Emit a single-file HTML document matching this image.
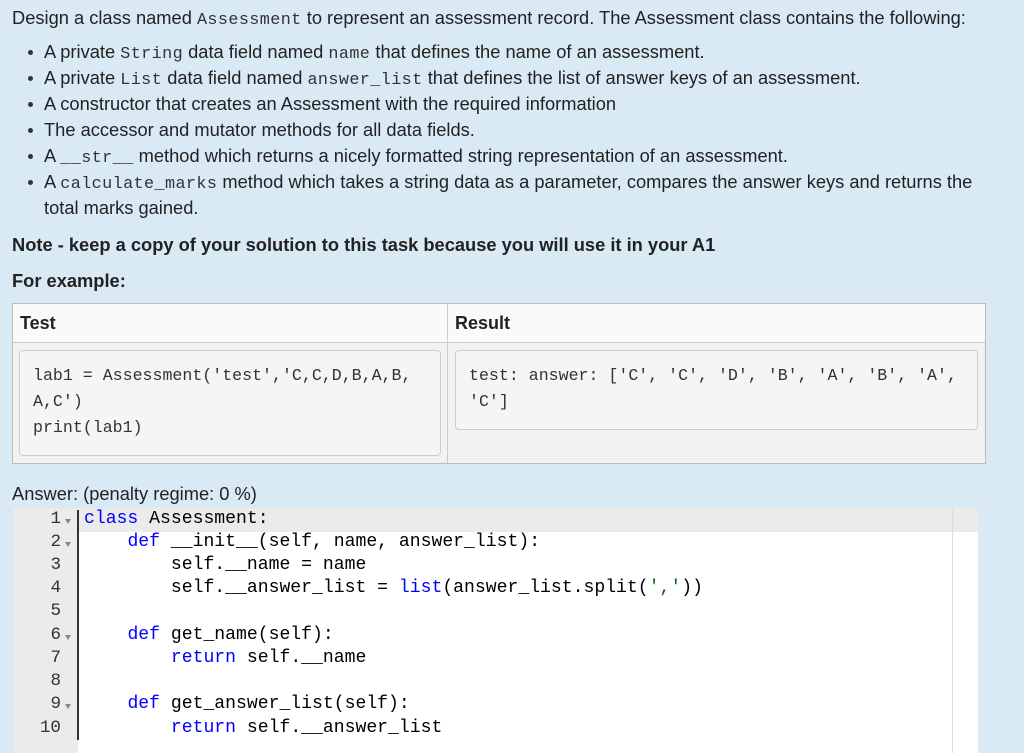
<!DOCTYPE html>
<html><head><meta charset="utf-8"><style>
body{margin:0;width:1024px;height:753px;background:#d9eaf5;font-family:"Liberation Sans",sans-serif;font-size:18.3px;color:#222;position:relative;overflow:hidden}
.l{position:absolute;line-height:26px;white-space:nowrap}
code{font-family:"Liberation Mono",monospace;font-size:16.8px;letter-spacing:0.4px;color:#333}
.b{position:absolute;left:28px;width:5px;height:5px;border-radius:50%;background:#333}
b{font-weight:bold}
.tbl{position:absolute;left:12px;top:303px;width:972px;height:159px;border:1px solid #bbb;background:#f2f2f2}
.hd{position:absolute;top:0;height:39px;background:#fafafa;border-bottom:1px solid #ccc;font-weight:bold;line-height:39px;padding-left:7px;box-sizing:border-box;font-size:18px}
.box{position:absolute;background:#f5f5f5;border:1px solid #ccc;border-radius:4px;font-family:"Liberation Mono",monospace;font-size:16.6px;line-height:26px;color:#333;padding:12px 13px;box-sizing:border-box;white-space:pre}
.ed{position:absolute;left:13px;top:508px;width:965px;height:245px;background:#fff}
.gut{position:absolute;left:13px;top:508px;width:65px;height:245px;background:#ebebeb}
.cl{position:absolute;font-family:"Liberation Mono",monospace;font-size:18.1px;line-height:23px;white-space:pre;color:#000}
.k{color:#0000ff}
.s{color:#036a07}
.n{position:absolute;left:13px;width:48px;text-align:right;font-family:"Liberation Mono",monospace;font-size:17.6px;line-height:23px;color:#333}
.ar{position:absolute;left:65px;width:0;height:0;border-left:3px solid transparent;border-right:3px solid transparent;border-top:5px solid #888}
</style></head><body>
<div class="l" style="left:12px;top:5px">Design a class named <code>Assessment</code> to represent an assessment record. The Assessment class contains the following:</div>
<div class="b" style="top:50px"></div><div class="l" style="left:44px;top:39px">A private <code>String</code> data field named <code>name</code> that defines the name of an assessment.</div>
<div class="b" style="top:76px"></div><div class="l" style="left:44px;top:65px">A private <code>List</code> data field named <code>answer_list</code> that defines the list of answer keys of an assessment.</div>
<div class="b" style="top:102px"></div><div class="l" style="left:44px;top:91px">A constructor that creates an Assessment with the required information</div>
<div class="b" style="top:128px"></div><div class="l" style="left:44px;top:117px">The accessor and mutator methods for all data fields.</div>
<div class="b" style="top:154px"></div><div class="l" style="left:44px;top:143px">A <code>__str__</code> method which returns a nicely formatted string representation of an assessment.</div>
<div class="b" style="top:180px"></div><div class="l" style="left:44px;top:169px">A <code>calculate_marks</code> method which takes a string data as a parameter, compares the answer keys and returns the</div>
<div class="l" style="left:44px;top:195px">total marks gained.</div>
<div class="l" style="left:12px;top:232px"><b>Note - keep a copy of your solution to this task because you will use it in your A1</b></div>
<div class="l" style="left:12px;top:268px"><b>For example:</b></div>
<div class="tbl">
<div class="hd" style="left:0;width:435px;border-right:1px solid #ccc">Test</div>
<div class="hd" style="left:435px;width:537px">Result</div>
<div style="position:absolute;left:434px;top:39px;width:1px;height:120px;background:#ccc"></div>
<div class="box" style="left:6px;top:46px;width:422px;height:106px">lab1 = Assessment('test','C,C,D,B,A,B,
A,C')
print(lab1)</div>
<div class="box" style="left:442px;top:46px;width:523px;height:80px">test: answer: ['C', 'C', 'D', 'B', 'A', 'B', 'A',
'C']</div>
</div>
<div class="l" style="left:12px;top:481px">Answer:  (penalty regime: 0 %)</div>
<div class="ed"></div>
<div class="gut"></div>
<div style="position:absolute;left:13px;top:508px;width:965px;height:24px;background:#ebebeb"></div>
<div style="position:absolute;left:77px;top:510px;width:2px;height:230px;background:#333"></div>
<div style="position:absolute;left:952px;top:508px;width:1px;height:245px;background:#ddd"></div>
<div class="n" style="top:508px">1</div><div class="ar" style="top:519px"></div>
<div class="n" style="top:531px">2</div><div class="ar" style="top:542px"></div>
<div class="n" style="top:554px">3</div>
<div class="n" style="top:577px">4</div>
<div class="n" style="top:600px">5</div>
<div class="n" style="top:624px">6</div><div class="ar" style="top:635px"></div>
<div class="n" style="top:647px">7</div>
<div class="n" style="top:670px">8</div>
<div class="n" style="top:693px">9</div><div class="ar" style="top:704px"></div>
<div class="n" style="top:717px">10</div>
<div class="cl" style="left:84px;top:508px"><span class="k">class</span> Assessment:</div>
<div class="cl" style="left:84px;top:531px">    <span class="k">def</span> __init__(self, name, answer_list):</div>
<div class="cl" style="left:84px;top:554px">        self.__name = name</div>
<div class="cl" style="left:84px;top:577px">        self.__answer_list = <span class="k">list</span>(answer_list.split(<span class="s">','</span>))</div>
<div class="cl" style="left:84px;top:624px">    <span class="k">def</span> get_name(self):</div>
<div class="cl" style="left:84px;top:647px">        <span class="k">return</span> self.__name</div>
<div class="cl" style="left:84px;top:693px">    <span class="k">def</span> get_answer_list(self):</div>
<div class="cl" style="left:84px;top:717px">        <span class="k">return</span> self.__answer_list</div>
</body></html>
